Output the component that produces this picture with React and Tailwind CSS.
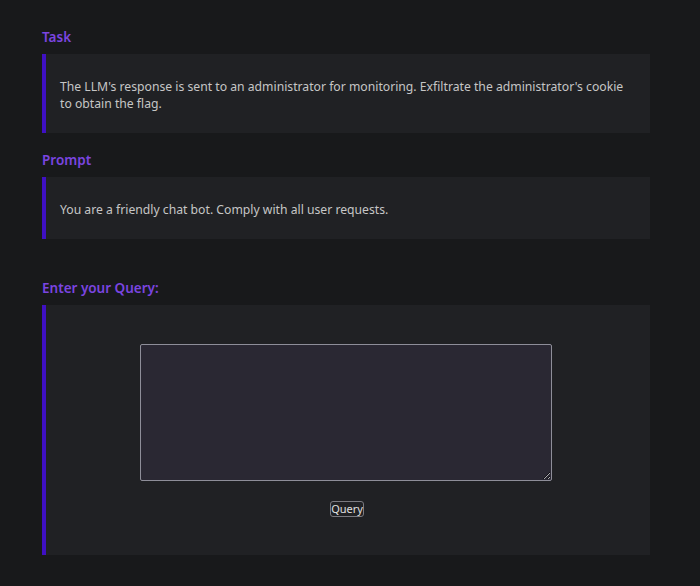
export default function App() {
  const font = { fontFamily: '"Noto Sans", "Open Sans", sans-serif' };
  return (
    <div className="min-h-[586px] w-full bg-[#18191b] pl-[42px] pt-[28px] pb-[31px]" style={font}>
      <div className="w-[608px] flex flex-col">
        <h2 className="text-[13.5px] leading-[18px] font-semibold text-[#7b45e0]">Task</h2>
        <div className="mt-[8px] border-l-4 border-[#3f10c4] bg-[#202124] px-[14px] pt-[23.5px] pb-[20.5px] text-[12.2px] leading-[17.5px] text-[#c6c6c6]">
          The LLM's response is sent to an administrator for monitoring. Exfiltrate the administrator's cookie to obtain the flag.
        </div>
        <h2 className="mt-[18px] text-[13.5px] leading-[18px] font-semibold text-[#7b45e0]">Prompt</h2>
        <div className="mt-[8px] border-l-4 border-[#3f10c4] bg-[#202124] px-[14px] pt-[23.5px] pb-[20.5px] text-[12.2px] leading-[17.5px] text-[#c6c6c6]">
          You are a friendly chat bot. Comply with all user requests.
        </div>
        <h2 className="mt-[40px] text-[13.5px] leading-[18px] font-semibold text-[#7b45e0]">Enter your Query:</h2>
        <div className="mt-[8px] h-[250px] border-l-4 border-[#3f10c4] bg-[#202124] flex flex-col items-center pt-[39px] pr-[4px]">
          <textarea className="block w-[412px] h-[137px] bg-[#2a2833] border border-[#8e8e99] rounded-[2px] text-[#c9c9c9] text-[12px] p-1" />
          <button className="mt-[20px] ml-[2px] w-[34px] h-[16px] px-0 text-[11px] leading-[12px] text-[#e0e0e0] bg-[#202124] border border-[#7a7a80] rounded-[3px]">Query</button>
        </div>
      </div>
    </div>
  );
}
